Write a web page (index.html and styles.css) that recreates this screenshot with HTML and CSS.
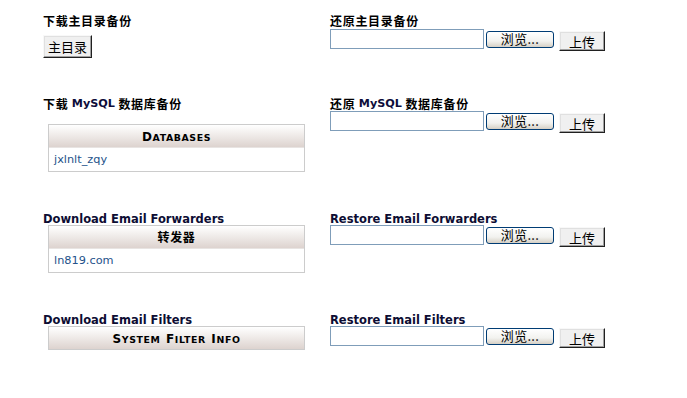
FILE: index.html
```html
<!DOCTYPE html>
<html>
<head>
<meta charset="utf-8">
<link rel="stylesheet" href="styles.css">
</head>
<body>
<div class="page">
  <section class="row r1">
    <div class="col left">
      <h3 class="head zh">下载主目录备份</h3>
      <button class="classic home">主目录</button>
    </div>
    <div class="col right">
      <h3 class="head zh">还原主目录备份</h3>
      <div class="upload">
        <span class="field"></span><button class="browse">浏览...</button><button class="classic send">上传</button>
      </div>
    </div>
  </section>

  <section class="row r2">
    <div class="col left">
      <h3 class="head zh">下载 <span class="lat">MySQL</span> 数据库备份</h3>
      <div class="box gap">
        <div class="box-head"><span class="cap">D</span><span class="sm">atabases</span></div>
        <div class="box-item">jxlnlt_zqy</div>
      </div>
    </div>
    <div class="col right">
      <h3 class="head zh">还原 <span class="lat">MySQL</span> 数据库备份</h3>
      <div class="upload">
        <span class="field"></span><button class="browse">浏览...</button><button class="classic send">上传</button>
      </div>
    </div>
  </section>

  <section class="row r3">
    <div class="col left">
      <h3 class="head en">Download Email Forwarders</h3>
      <div class="box">
        <div class="box-head zhhead">转发器</div>
        <div class="box-item">ln819.com</div>
      </div>
    </div>
    <div class="col right">
      <h3 class="head en">Restore Email Forwarders</h3>
      <div class="upload">
        <span class="field"></span><button class="browse">浏览...</button><button class="classic send">上传</button>
      </div>
    </div>
  </section>

  <section class="row r4">
    <div class="col left">
      <h3 class="head en">Download Email Filters</h3>
      <div class="box">
        <div class="box-head"><span class="cap">S</span><span class="sm">ystem</span> <span class="cap">F</span><span class="sm">ilter</span> <span class="cap">I</span><span class="sm">nfo</span></div>
      </div>
    </div>
    <div class="col right">
      <h3 class="head en">Restore Email Filters</h3>
      <div class="upload">
        <span class="field"></span><button class="browse">浏览...</button><button class="classic send">上传</button>
      </div>
    </div>
  </section>
</div>
</body>
</html>
```

FILE: styles.css
```css
html, body {
  margin: 0;
  padding: 0;
  background: #ffffff;
}

.page {
  padding: 14px 0 0 43px;
  font-family: "DejaVu Sans", Verdana, "Noto Sans CJK SC", sans-serif;
  color: #000;
}

.row {
  display: flex;
  align-items: flex-start;
}

.r1 { height: 83px; }
.r2 { height: 114px; }
.r3 { height: 101px; }
.r4 { height: 60px; }

.col.left {
  width: 287px;
}

.col.right {
  width: 300px;
}

.head {
  margin: 0;
  font-weight: bold;
  height: 14px;
  overflow: visible;
  white-space: nowrap;
}

.head.zh {
  font-family: "Noto Sans CJK SC", sans-serif;
  font-size: 12px;
  line-height: 14px;
  letter-spacing: 0.7px;
  color: #000;
}

.head .lat {
  font-family: "DejaVu Sans", Verdana, sans-serif;
  font-size: 11.2px;
  letter-spacing: 0;
  color: #0d0d3a;
  vertical-align: top;
  line-height: 14px;
}

.head.en {
  font-size: 11.5px;
  line-height: 17px;
  color: #0d0d33;
}

.classic {
  font-family: "Noto Sans CJK SC", sans-serif;
  font-size: 13px;
  color: #000;
  background: #f0f0f0;
  border: 1px solid;
  border-color: #f8f8f8 #202020 #202020 #f8f8f8;
  box-shadow: inset -1px -1px 0 #a0a0a0, inset 1px 1px 0 #e0e0e0;
  padding: 0;
  margin: 0;
  line-height: 18px;
}

.home {
  width: 49px;
  height: 23px;
  margin-top: 7px;
  display: block;
}

.upload {
  display: flex;
  align-items: flex-start;
  margin-top: 0;
}

.r1 .upload {
  margin-top: 1px;
}

.field {
  display: block;
  width: 152px;
  height: 18px;
  border: 1px solid #7f9db9;
  background: #fff;
}

.browse {
  width: 68px;
  height: 17px;
  margin: 2px 0 0 2px;
  padding: 0 0 2px 0;
  border: 1px solid #003c74;
  border-radius: 3px;
  background: linear-gradient(#ffffff, #f2f2ef 60%, #d6d0c5);
  font-family: "Noto Sans CJK SC", sans-serif;
  font-size: 13px;
  line-height: 13px;
  color: #000;
  letter-spacing: 0.3px;
}

.send {
  width: 46px;
  height: 20px;
  margin: 2px 0 0 5px;
  line-height: 17px;
}

.box {
  margin-left: 5px;
  width: 255px;
  border: 1px solid #cccccc;
  background: #fff;
}

.box.gap {
  margin-top: 13px;
}

.box-head {
  height: 22px;
  line-height: 22px;
  text-align: center;
  font-weight: bold;
  color: #000;
  text-transform: uppercase;
  background: linear-gradient(#ffffff, #f3f0ee 35%, #ddd3cf);
  white-space: nowrap;
}

.box-head .cap {
  font-size: 12px;
  letter-spacing: 0.6px;
}

.box-head .sm {
  font-size: 9.4px;
  letter-spacing: 0.6px;
}

.box-head.zhhead {
  font-family: "Noto Sans CJK SC", sans-serif;
  font-size: 12px;
  letter-spacing: 0.7px;
}

.box-item {
  height: 23px;
  line-height: 23px;
  padding-left: 5px;
  border-top: 1px solid #e8e4e2;
  font-size: 11.3px;
  color: #24528a;
}
```
